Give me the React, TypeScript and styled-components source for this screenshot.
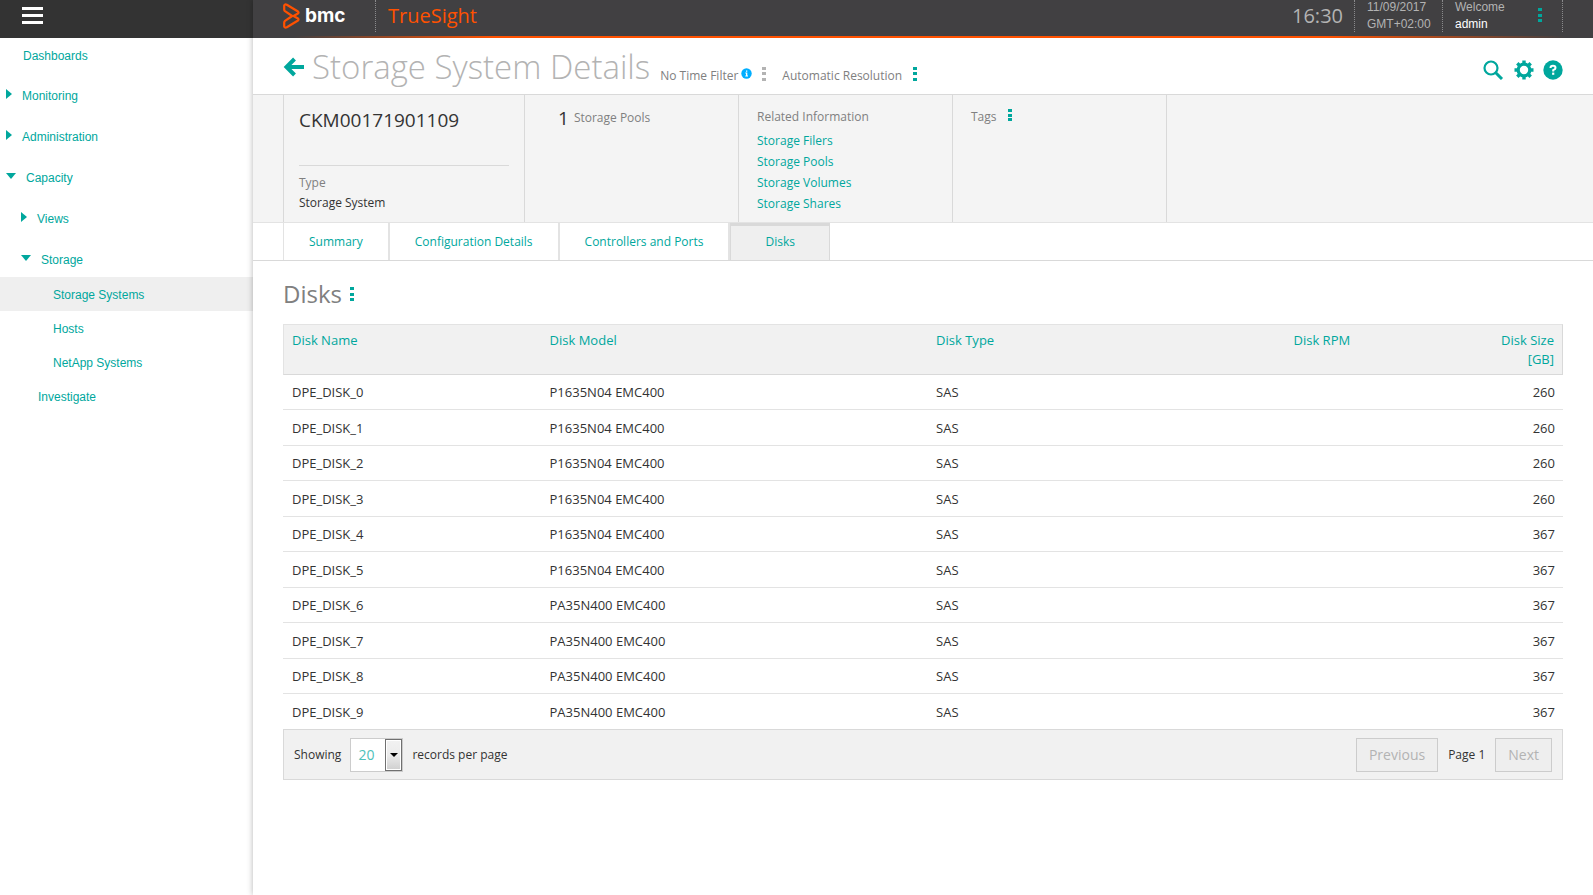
import React from 'react';
import styled, { createGlobalStyle, css } from 'styled-components';

const teal = '#00a79d';
const line = '#d9d9d9';
const sans = '"Open Sans", "Noto Sans", sans-serif';
const arial = '"Liberation Sans", Arial, sans-serif';

const GlobalStyle = createGlobalStyle`
  * { box-sizing: border-box; }
  body { margin: 0; background: #fff; color: #333; font-family: ${sans}; font-size: 12px; line-height: 16px; }
  a { color: ${teal}; text-decoration: none; }
  button { font-family: inherit; }
  h1, h2, p, dl, dd, ul { margin: 0; padding: 0; font-weight: 400; }
`;

const Page = styled.div`
  display: grid;
  grid-template-columns: 253px 1fr;
  min-height: 100vh;
`;

/* Side navigation */
const Sidebar = styled.aside`
  background: #fff;
`;
const SidebarHead = styled.div`
  display: flex;
  align-items: flex-start;
  height: 38px;
  padding: 7px 22px;
  background: #333;
`;
const MenuButton = styled.button`
  display: flex;
  flex-direction: column;
  gap: 4px;
  width: 21px;
  padding: 0;
  border: 0;
  background: none;
`;
const Bar = styled.span`
  width: 100%;
  height: 3px;
  background: #fff;
`;
const NavList = styled.ul`
  list-style: none;
  font-family: ${arial};
`;
const NavItem = styled.li<{ $indent: number; $spaced?: boolean; $active?: boolean }>`
  margin-top: ${p => (p.$spaced ? 7 : 0)}px;
  a {
    display: flex;
    align-items: center;
    gap: 10px;
    height: 34px;
    padding-top: ${p => (p.$spaced ? 0 : 2)}px;
    padding-left: ${p => p.$indent}px;
    background: ${p => (p.$active ? '#efefef' : 'transparent')};
  }
`;
const Caret = styled.svg`
  flex: none;
  margin-bottom: 4px;
  fill: ${teal};
`;

/* Product header */
const Main = styled.main`
  min-width: 0;
  background: #fff;
  box-shadow: 0 0 6px rgba(0, 0, 0, 0.3);
`;
const Header = styled.header`
  display: flex;
  align-items: flex-start;
  justify-content: space-between;
  height: 38px;
  padding: 0 30px;
  background:
    linear-gradient(90deg, transparent 3%, #ff5100 18%, #ff5100 80%, transparent 98%) bottom / 100% 2px no-repeat,
    #414042;
`;
const HeaderGroup = styled.div`
  display: flex;
  height: 32px;
`;
const Brand = styled.div`
  display: flex;
  align-items: center;
  gap: 5px;
  width: 93px;
  border-right: 1px dotted #8a8a8c;
  color: #fff;
  font: 700 19px/32px Inter, sans-serif;
`;
const Product = styled.div`
  padding-left: 12px;
  color: #ff5100;
  font-size: 20px;
  line-height: 32px;
`;
const Clock = styled.time`
  padding-right: 11px;
  color: #b3b3b3;
  font-size: 20px;
  line-height: 32px;
`;
const HeaderCell = styled.div<{ $w: number }>`
  display: flex;
  justify-content: space-between;
  width: ${p => p.$w}px;
  padding: 0 20px 0 12px;
  border-left: 1px dotted #8a8a8c;
  color: #b3b3b3;
  font: 12px/17px ${arial};
  strong { display: block; color: #fff; font-weight: 400; }
`;
const HeaderText = styled.div`
  margin-top: -1px;
`;
const HeaderEnd = styled.div`
  border-left: 1px dotted #8a8a8c;
`;
const Dots = styled.button<{ $muted?: boolean; $small?: boolean }>`
  display: flex;
  flex-direction: column;
  justify-content: space-between;
  width: 4px;
  height: ${p => (p.$small ? 12 : 14)}px;
  padding: 0;
  border: 0;
  background: none;
  i {
    width: 4px;
    height: 3px;
    background: ${p => (p.$muted ? '#b3b3b3' : teal)};
  }
`;
const HeaderMenu = styled.div`
  padding-top: 8px;
`;

/* Title row */
const TitleBar = styled.div`
  display: flex;
  justify-content: space-between;
  height: 57px;
  padding: 0 30px;
  border-bottom: 1px solid ${line};
`;
const TitleGroup = styled.div`
  display: flex;
  align-items: center;
  padding-top: 2px;
`;
const PageTitle = styled.h1`
  margin-left: 8px;
  color: #b3b3b3;
  font-size: 33px;
  font-weight: 300;
  line-height: 54px;
  white-space: nowrap;
`;
const Filter = styled.div<{ $gap: number; $left: number }>`
  display: flex;
  align-items: center;
  gap: ${p => p.$gap}px;
  margin-left: ${p => p.$left}px;
  padding-top: 13px;
  color: #808080;
  white-space: nowrap;
`;
const FilterLabel = styled.span`
  display: flex;
  align-items: center;
  gap: 3px;
  padding-top: 5px;
  svg { margin-bottom: 6px; }
`;
const Actions = styled.div`
  display: flex;
  align-items: center;
  gap: 9px;
  padding-top: 8px;
`;
const IconButton = styled.button`
  display: flex;
  padding: 0;
  border: 0;
  background: none;
`;

/* Summary band */
const Band = styled.section`
  display: flex;
  height: 128px;
  padding-left: 30px;
  border-bottom: 1px solid #e3e3e3;
  background: #f4f4f4;
`;
const Card = styled.div<{ $w: number }>`
  width: ${p => p.$w}px;
  padding: 14px 14px 0 18px;
  border-left: 1px solid ${line};
  color: #808080;
`;
const NameCard = styled(Card)`
  padding: 10px 15px 0;
`;
const SystemName = styled.div`
  height: 61px;
  border-bottom: 1px solid ${line};
  color: #333;
  font-size: 19px;
  line-height: 30px;
`;
const Facts = styled.dl`
  padding-top: 7px;
  line-height: 20px;
  dd { color: #333; }
`;
const Count = styled.div`
  display: flex;
  align-items: center;
  gap: 5px;
  padding-left: 15px;
  line-height: 18px;
  b { color: #333; font-size: 19px; font-weight: 400; }
`;
const LinkList = styled.ul`
  padding-top: 5px;
  list-style: none;
  line-height: 21px;
`;
const TagRow = styled.div`
  display: flex;
  gap: 11px;
`;
const CardEnd = styled.div`
  border-left: 1px solid ${line};
`;

/* Tabs */
const Tabs = styled.nav`
  display: flex;
  height: 38px;
  padding-left: 30px;
  border-bottom: 1px solid ${line};
`;
const Tab = styled.a<{ $active?: boolean }>`
  padding: 11px 25px 0;
  border-right: 2px solid #e3e3e3;
  &:first-child { border-left: 1px solid #e3e3e3; }
  ${p => p.$active && css`
    padding: 8px 34px 0;
    border-top: 3px solid ${line};
    border-right: 1px solid ${line};
    border-left: 1px solid ${line};
    background: #efefef;
  `}
`;

/* Disk table */
const Content = styled.section`
  padding: 18px 30px;
`;
const Heading = styled.div`
  display: flex;
  align-items: center;
  gap: 8px;
  height: 30px;
`;
const SectionTitle = styled.h2`
  color: #808080;
  font-size: 24px;
  line-height: 30px;
`;
const Table = styled.table`
  width: 100%;
  margin-top: 15px;
  border-collapse: separate;
  border-spacing: 0;
  table-layout: fixed;
  font-size: 13px;
  line-height: 19px;
`;
const HeadRow = styled.tr`
  height: 51px;
  background: #f1f1f1;
  th {
    border-top: 1px solid #e3e3e3;
    border-bottom: 1px solid ${line};
  }
  th:first-child { border-left: 1px solid #e3e3e3; }
  th:last-child { border-right: 1px solid ${line}; }
`;
const Th = styled.th<{ $w: string; $right?: boolean }>`
  width: ${p => p.$w};
  padding: 6px 8px 0;
  color: ${teal};
  font-weight: 400;
  text-align: ${p => (p.$right ? 'right' : 'left')};
  vertical-align: top;
`;
const Td = styled.td<{ $right?: boolean }>`
  padding: 0 8px;
  text-align: ${p => (p.$right ? 'right' : 'left')};
  &:first-child { padding-left: 9px; }
`;
const Row = styled.tr`
  height: 35px;
  &:nth-child(even):not(:last-child) { height: 36px; }
  &:nth-child(even) ${Td} { padding-top: 1px; }
  &:not(:last-child) ${Td} { border-bottom: 1px solid #e3e3e3; }
`;
const TableFoot = styled.div`
  display: flex;
  align-items: center;
  justify-content: space-between;
  height: 51px;
  padding: 0 10px;
  border: 1px solid ${line};
  background: #f1f1f1;
`;
const FootGroup = styled.div<{ $gap: number }>`
  display: flex;
  align-items: center;
  gap: ${p => p.$gap}px;
`;
const SelectBox = styled.span`
  display: flex;
  width: 53px;
  height: 34px;
  border: 1px solid #ccc;
  background: #fff;
`;
const Select = styled.select`
  flex: 1;
  padding: 0 0 0 7px;
  border: 0;
  outline: 0;
  appearance: none;
  background: #fff;
  color: #4dc1ba;
  font: 14px/32px ${sans};
`;
const SelectArrow = styled.span`
  display: flex;
  align-items: center;
  justify-content: center;
  width: 17px;
  border: 1px solid #707070;
  background: linear-gradient(#f2f2f2, #ebebeb 50%, #cfcfcf) padding-box;
  box-shadow: inset 0 0 0 1px #fff;
`;
const PageButton = styled.button`
  height: 34px;
  padding: 0 12px;
  border: 1px solid #ccc;
  background: #eee;
  color: #b3b3b3;
  font-size: 14px;
`;

const MoreButton = ({ muted, small, label }: { muted?: boolean; small?: boolean; label: string }) => (
  <Dots type="button" $muted={muted} $small={small} aria-label={label}><i /><i /><i /></Dots>
);

const CaretRight = () => (
  <Caret width="6" height="10" viewBox="0 0 6 10"><path d="M0 0L6 5L0 10Z" /></Caret>
);
const CaretDown = () => (
  <Caret width="10" height="6" viewBox="0 0 10 6"><path d="M0 0H10L5 6Z" /></Caret>
);

type NavEntry = { label: string; indent: number; spaced?: boolean; active?: boolean; caret?: 'right' | 'down' };
const nav: NavEntry[] = [
  { label: 'Dashboards', indent: 23 },
  { label: 'Monitoring', indent: 6, spaced: true, caret: 'right' },
  { label: 'Administration', indent: 6, spaced: true, caret: 'right' },
  { label: 'Capacity', indent: 6, spaced: true, caret: 'down' },
  { label: 'Views', indent: 21, spaced: true, caret: 'right' },
  { label: 'Storage', indent: 21, spaced: true, caret: 'down' },
  { label: 'Storage Systems', indent: 53, active: true },
  { label: 'Hosts', indent: 53 },
  { label: 'NetApp Systems', indent: 53 },
  { label: 'Investigate', indent: 38 },
];

const disks = Array.from({ length: 10 }, (_, i) => ({
  name: `DPE_DISK_${i}`,
  model: i < 6 ? 'P1635N04 EMC400' : 'PA35N400 EMC400',
  type: 'SAS',
  size: i < 4 ? 260 : 367,
}));

const related = ['Storage Filers', 'Storage Pools', 'Storage Volumes', 'Storage Shares'];

export default function App() {
  return (
    <>
      <GlobalStyle />
      <Page>
        <Sidebar>
          <SidebarHead>
            <MenuButton type="button" aria-label="Menu"><Bar /><Bar /><Bar /></MenuButton>
          </SidebarHead>
          <nav>
            <NavList>
              {nav.map(n => (
                <NavItem key={n.label} $indent={n.indent} $spaced={n.spaced} $active={n.active}>
                  <a href="#">
                    {n.caret === 'right' && <CaretRight />}
                    {n.caret === 'down' && <CaretDown />}
                    {n.label}
                  </a>
                </NavItem>
              ))}
            </NavList>
          </nav>
        </Sidebar>
        <Main>
          <Header>
            <HeaderGroup>
              <Brand>
                <svg width="17" height="26" viewBox="0 0 17 26" fill="none" stroke="#ff5100" strokeWidth="2.2" strokeLinejoin="round">
                  <path d="M1.200 2.500V6.500Q1.200 7.500 2 8.200L9.200 13L2 17.800Q1.200 18.500 1.200 19.500V23.500Q1.800 25.200 3.800 24.200L15 17.500Q16 16.500 15 15.500L10.600 13L15 10.500Q16 9.500 15 8.500L3.800 1.800Q1.800 0.800 1.200 2.500Z" />
                </svg>
                bmc
              </Brand>
              <Product>TrueSight</Product>
            </HeaderGroup>
            <HeaderGroup>
              <Clock>16:30</Clock>
              <HeaderCell $w={88}><HeaderText>11/09/2017<br />GMT+02:00</HeaderText></HeaderCell>
              <HeaderCell $w={120}>
                <HeaderText>Welcome<strong>admin</strong></HeaderText>
                <HeaderMenu><MoreButton label="User menu" /></HeaderMenu>
              </HeaderCell>
              <HeaderEnd />
            </HeaderGroup>
          </Header>
          <TitleBar>
            <TitleGroup>
              <IconButton type="button" aria-label="Back">
                <svg width="21" height="20" viewBox="0 0 21 20" fill="none" stroke={teal} strokeWidth="4">
                  <path d="M11.500 2L3.500 10L11.500 18M3 10H21" />
                </svg>
              </IconButton>
              <PageTitle>Storage System Details</PageTitle>
              <Filter $gap={10} $left={10}>
                <FilterLabel>
                  No Time Filter
                  <svg width="11" height="11" viewBox="0 0 11 11">
                    <circle cx="5.500" cy="5.500" r="5.200" fill="#00aeff" />
                    <path d="M5 2.500H6.300V3.800H5ZM4.300 4.600H6.300V7.600H7V8.500H4.300V7.600H5V5.500H4.300Z" fill="#fff" />
                  </svg>
                </FilterLabel>
                <MoreButton muted label="Time filter options" />
              </Filter>
              <Filter $gap={11} $left={16}>
                <FilterLabel>Automatic Resolution</FilterLabel>
                <MoreButton label="Resolution options" />
              </Filter>
            </TitleGroup>
            <Actions>
              <IconButton type="button" aria-label="Search">
                <svg width="22" height="20" viewBox="0 0 22 20" fill="none" stroke={teal}>
                  <circle cx="8" cy="8" r="6.500" strokeWidth="2.200" />
                  <path d="M12.500 12.500L19 19" strokeWidth="3" />
                </svg>
              </IconButton>
              <IconButton type="button" aria-label="Settings">
                <svg width="20" height="20" viewBox="0 0 20 20" fill="none" stroke={teal}>
                  <circle cx="10" cy="10" r="5.800" strokeWidth="3.200" />
                  <path d="M10 0.500V4M10 16V19.500M0.500 10H4M16 10H19.500M3.300 3.300L5.800 5.800M14.200 14.200L16.700 16.700M3.300 16.700L5.800 14.200M14.200 5.800L16.700 3.300" strokeWidth="3.400" />
                </svg>
              </IconButton>
              <IconButton type="button" aria-label="Help">
                <svg width="20" height="20" viewBox="0 0 20 20">
                  <circle cx="10" cy="10" r="9.700" fill={teal} />
                  <path d="M7.500 8Q7.500 5.700 10 5.700T12.500 7.900Q12.500 9 10.200 10.200V11.500" fill="none" stroke="#fff" strokeWidth="2" />
                  <path d="M9.100 12.600H11.300V14.800H9.100Z" fill="#fff" />
                </svg>
              </IconButton>
            </Actions>
          </TitleBar>
          <Band>
            <NameCard $w={241}>
              <SystemName>CKM00171901109</SystemName>
              <Facts><dt>Type</dt><dd>Storage System</dd></Facts>
            </NameCard>
            <Card $w={214}><Count><b>1</b>Storage Pools</Count></Card>
            <Card $w={214}>
              <p>Related Information</p>
              <LinkList>{related.map(r => <li key={r}><a href="#">{r}</a></li>)}</LinkList>
            </Card>
            <Card $w={214}><TagRow>Tags<MoreButton small label="Tag options" /></TagRow></Card>
            <CardEnd />
          </Band>
          <Tabs>
            <Tab href="#">Summary</Tab>
            <Tab href="#">Configuration Details</Tab>
            <Tab href="#">Controllers and Ports</Tab>
            <Tab href="#" $active>Disks</Tab>
          </Tabs>
          <Content>
            <Heading>
              <SectionTitle>Disks</SectionTitle>
              <MoreButton label="Disks options" />
            </Heading>
            <Table>
              <thead>
                <HeadRow>
                  <Th $w="20.2%">Disk Name</Th>
                  <Th $w="30.2%">Disk Model</Th>
                  <Th $w="19.8%">Disk Type</Th>
                  <Th $w="13.8%" $right>Disk RPM</Th>
                  <Th $w="16%" $right>Disk Size<br />[GB]</Th>
                </HeadRow>
              </thead>
              <tbody>
                {disks.map(d => (
                  <Row key={d.name}>
                    <Td>{d.name}</Td>
                    <Td>{d.model}</Td>
                    <Td>{d.type}</Td>
                    <Td $right />
                    <Td $right>{d.size}</Td>
                  </Row>
                ))}
              </tbody>
            </Table>
            <TableFoot>
              <FootGroup $gap={9}>
                <label htmlFor="page-size">Showing</label>
                <SelectBox>
                  <Select id="page-size" defaultValue="20"><option>20</option></Select>
                  <SelectArrow><svg width="8" height="4" viewBox="0 0 8 4"><path d="M0 0H8L4 4Z" /></svg></SelectArrow>
                </SelectBox>
                <span>records per page</span>
              </FootGroup>
              <FootGroup $gap={10}>
                <PageButton type="button" disabled>Previous</PageButton>
                <span>Page 1</span>
                <PageButton type="button" disabled>Next</PageButton>
              </FootGroup>
            </TableFoot>
          </Content>
        </Main>
      </Page>
    </>
  );
}
